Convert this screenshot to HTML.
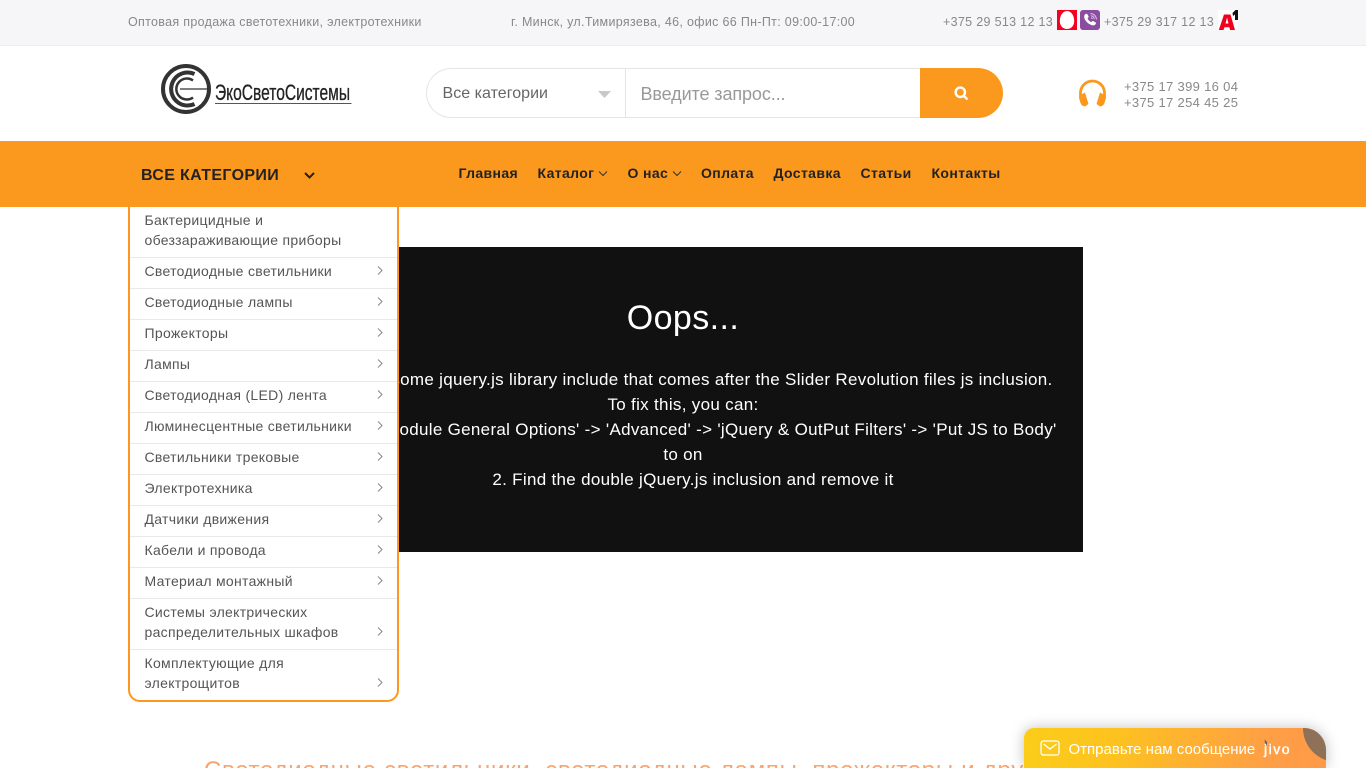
<!DOCTYPE html>
<html lang="ru"><head><meta charset="utf-8"><title>ЭкоСветоСистемы</title>
<style>
html,body{margin:0;padding:0;width:1366px;height:768px;overflow:hidden;background:#fff}
body{font-family:"Liberation Sans",sans-serif;position:relative}
.a{position:absolute;white-space:nowrap}
.top{color:#888;font-size:12.5px;letter-spacing:.32px;line-height:16px}
.nav{top:165px;font-size:14px;font-weight:bold;letter-spacing:.38px;color:#222;line-height:16px}
#menu{position:absolute;left:128px;top:207px;width:267px;height:493px;border:2px solid #fb991e;border-top:0;border-radius:0 0 12px 12px;background:#fff;z-index:3}
.m{position:absolute;left:0;width:267px;border-bottom:1px solid #e9e9e9;box-sizing:border-box;padding-left:14.5px;color:#555;font-size:14px;letter-spacing:.3px;line-height:20px}
.m svg{position:absolute;left:246px}
.oo{position:absolute;left:283px;top:247px;width:800px;height:305px;background:#111;color:#fff;text-align:center}
.oo div{position:absolute;left:0;width:800px;white-space:nowrap;font-size:17px;letter-spacing:.31px;line-height:25px}
</style></head><body>
<div class="a" style="left:0;top:0;width:1366px;height:45px;background:#f6f6f8;border-bottom:1px solid #ececec"></div>
<div class="a top" style="left:128px;top:14px">Оптовая продажа светотехники, электротехники</div>
<div class="a top" style="left:511px;top:14px">г. Минск, ул.Тимирязева, 46, офис 66 Пн-Пт: 09:00-17:00</div>
<div class="a top" style="left:943px;top:14px">+375 29 513 12 13</div>
<svg class="a" style="left:1057px;top:10px" width="20" height="20"><rect width="20" height="20" fill="#f5001e"/><path d="M10 1C5.500 1 2.800 6 2.800 11c0 4.800 3 8 7.200 8s7.200-3.200 7.200-8C17.200 6 14.500 1 10 1z" fill="#fff"/></svg>
<svg class="a" style="left:1080px;top:10px" width="20" height="20"><rect width="20" height="20" rx="3" fill="#8a4da0"/><path d="M5 4.500c1-1 2-1 2.500 0l1 1.800c.3.700 0 1.200-.7 1.700-.3.300-.2.700 0 1 .7 1.200 1.700 2.200 2.900 2.900.4.200.7.200 1-.1.500-.7 1-1 1.700-.7l1.800 1c1 .6 1 1.500 0 2.500-1 1-2.500 1.100-4.500.2-3-1.400-5-3.500-6.200-6.200C4 6.700 4 5.500 5 4.500z" fill="#fff"/><path d="M10.500 3.500c3.300.2 5.800 2.700 6 6M10.800 5.700c2 .2 3.300 1.500 3.500 3.500M11 7.700c.8.100 1.200.6 1.300 1.400" fill="none" stroke="#d9c3e3" stroke-width="1"/></svg>
<div class="a top" style="left:1104px;top:14px">+375 29 317 12 13</div>
<svg class="a" style="left:1218px;top:10px" width="20" height="20"><rect width="20" height="20" fill="#fff"/><path d="M.8 20 6 4.500h6.500L17 20h-5l-.6-2.800H6.500L5.500 20zM7.500 13.500H10.500L9 7.500z" fill="#f0001c" fill-rule="evenodd"/><path d="M14.500 3 17.500 0H20V10H17V4.500L15 6z" fill="#111"/></svg>

<svg class="a" style="left:160px;top:62px" width="196" height="54">
<circle cx="26" cy="27" r="23" fill="none" stroke="#333" stroke-width="4"/>
<path d="M34.500 12A16.500 16.500 0 1 0 34.500 42" fill="none" stroke="#333" stroke-width="4"/>
<path d="M33 18.500A10.500 10.500 0 1 0 33 35.500" fill="none" stroke="#333" stroke-width="2.500"/>
<path d="M20 27H50" stroke="#333" stroke-width="1.300"/>
<text x="55" y="38" font-family="Liberation Sans,sans-serif" font-size="22" fill="#222" stroke="#222" stroke-width=".3" textLength="135" lengthAdjust="spacingAndGlyphs">ЭкоСветоСистемы</text>
<path d="M55 41.500H191.500" stroke="#555" stroke-width="1"/>
</svg>

<div class="a" style="left:426px;top:68px;width:495px;height:50px;box-sizing:border-box;border:1px solid #e5e5e5;border-right:0;border-radius:25px 0 0 25px;background:#fff"></div>
<div class="a" style="left:625px;top:69px;width:1px;height:48px;background:#e5e5e5"></div>
<div class="a" style="left:442.500px;top:84.500px;font-size:16px;line-height:18px;color:#666;letter-spacing:.03px">Все категории</div>
<svg class="a" style="left:598px;top:91px" width="13" height="8"><path d="M0 0H13L6.500 7z" fill="#c8c8c8"/></svg>
<div class="a" style="left:640.500px;top:84px;font-size:18px;line-height:20px;color:#999;letter-spacing:-.1px">Введите запрос...</div>
<div class="a" style="left:920px;top:68px;width:83px;height:50px;background:#fb991e;border-radius:0 25px 25px 0"></div>
<svg class="a" style="left:953px;top:85px" width="16" height="16"><circle cx="7.300" cy="7.300" r="4.700" fill="none" stroke="#fff" stroke-width="2.400"/><path d="M10.800 10.800 14.500 14.500" stroke="#fff" stroke-width="2.400"/></svg>

<svg class="a" style="left:1078px;top:79px" width="29" height="28"><path d="M2.500 20v-6a12 12 0 0 1 24 0v6" fill="none" stroke="#fb991e" stroke-width="2.800"/><path d="M1.500 16.500 7 13.500 10.500 25 7 27.500 4 26.500C2 24 1 20 1.500 16.500zM27.500 16.500 22 13.500 18.500 25 22 27.500 25 26.500C27 24 28 20 27.500 16.500z" fill="#fb991e"/></svg>
<div class="a top" style="left:1124px;top:79px;font-size:13px">+375 17 399 16 04</div>
<div class="a top" style="left:1124px;top:95px;font-size:13px">+375 17 254 45 25</div>

<div class="a" style="left:0;top:141px;width:1366px;height:66px;background:#fb991e"></div>
<div class="a" style="left:141px;top:166px;font-size:16px;line-height:19px;font-weight:bold;letter-spacing:.35px;color:#222">ВСЕ КАТЕГОРИИ</div>
<svg class="a" style="left:304px;top:171px" width="11" height="9"><path d="M1 2 5.500 6.500 10 2" fill="none" stroke="#222" stroke-width="2"/></svg>
<div class="a nav" style="left:458.500px">Главная</div>
<div class="a nav" style="left:537.500px">Каталог</div>
<svg class="a" style="left:598px;top:170px" width="10" height="7"><path d="M1 1.500 5 5.500 9 1.500" fill="none" stroke="#333" stroke-width="1"/></svg>
<div class="a nav" style="left:627.500px">О нас</div>
<svg class="a" style="left:672px;top:170px" width="10" height="7"><path d="M1 1.500 5 5.500 9 1.500" fill="none" stroke="#333" stroke-width="1"/></svg>
<div class="a nav" style="left:701px">Оплата</div>
<div class="a nav" style="left:773.500px">Доставка</div>
<div class="a nav" style="left:860.500px">Статьи</div>
<div class="a nav" style="left:931.500px">Контакты</div>

<div class="oo">
<div style="top:51px;font-size:34px;line-height:40px;letter-spacing:.43px">Oops...</div>
<div style="top:120px;left:4.500px">There is some jquery.js library include that comes after the Slider Revolution files js inclusion.</div>
<div style="top:145px">To fix this, you can:</div>
<div style="top:170px;left:2px">1. Go to 'Module General Options' -&gt; 'Advanced' -&gt; 'jQuery &amp; OutPut Filters' -&gt; 'Put JS to Body'</div>
<div style="top:195px">to on</div>
<div style="top:220px;left:10px">2. Find the double jQuery.js inclusion and remove it</div>
</div>

<div id="menu">
<div class="m" style="top:0;height:51px;padding-top:3px">Бактерицидные и<br>обеззараживающие приборы</div>
<div class="m" style="top:51px;height:31px;padding-top:3px">Светодиодные светильники<svg style="top:7px" width="8" height="11"><path d="M2 1.500 6 5.500 2 9.500" fill="none" stroke="#888" stroke-width="1"/></svg></div>
<div class="m" style="top:82px;height:31px;padding-top:3px">Светодиодные лампы<svg style="top:7px" width="8" height="11"><path d="M2 1.500 6 5.500 2 9.500" fill="none" stroke="#888" stroke-width="1"/></svg></div>
<div class="m" style="top:113px;height:31px;padding-top:3px">Прожекторы<svg style="top:7px" width="8" height="11"><path d="M2 1.500 6 5.500 2 9.500" fill="none" stroke="#888" stroke-width="1"/></svg></div>
<div class="m" style="top:144px;height:31px;padding-top:3px">Лампы<svg style="top:7px" width="8" height="11"><path d="M2 1.500 6 5.500 2 9.500" fill="none" stroke="#888" stroke-width="1"/></svg></div>
<div class="m" style="top:175px;height:31px;padding-top:3px">Светодиодная (LED) лента<svg style="top:7px" width="8" height="11"><path d="M2 1.500 6 5.500 2 9.500" fill="none" stroke="#888" stroke-width="1"/></svg></div>
<div class="m" style="top:206px;height:31px;padding-top:3px">Люминесцентные светильники<svg style="top:7px" width="8" height="11"><path d="M2 1.500 6 5.500 2 9.500" fill="none" stroke="#888" stroke-width="1"/></svg></div>
<div class="m" style="top:237px;height:31px;padding-top:3px">Светильники трековые<svg style="top:7px" width="8" height="11"><path d="M2 1.500 6 5.500 2 9.500" fill="none" stroke="#888" stroke-width="1"/></svg></div>
<div class="m" style="top:268px;height:31px;padding-top:3px">Электротехника<svg style="top:7px" width="8" height="11"><path d="M2 1.500 6 5.500 2 9.500" fill="none" stroke="#888" stroke-width="1"/></svg></div>
<div class="m" style="top:299px;height:31px;padding-top:3px">Датчики движения<svg style="top:7px" width="8" height="11"><path d="M2 1.500 6 5.500 2 9.500" fill="none" stroke="#888" stroke-width="1"/></svg></div>
<div class="m" style="top:330px;height:31px;padding-top:3px">Кабели и провода<svg style="top:7px" width="8" height="11"><path d="M2 1.500 6 5.500 2 9.500" fill="none" stroke="#888" stroke-width="1"/></svg></div>
<div class="m" style="top:361px;height:31px;padding-top:3px">Материал монтажный<svg style="top:7px" width="8" height="11"><path d="M2 1.500 6 5.500 2 9.500" fill="none" stroke="#888" stroke-width="1"/></svg></div>
<div class="m" style="top:392px;height:51px;padding-top:3px">Системы электрических<br>распределительных шкафов<svg style="top:27px" width="8" height="11"><path d="M2 1.500 6 5.500 2 9.500" fill="none" stroke="#888" stroke-width="1"/></svg></div>
<div class="m" style="top:443px;height:50px;padding-top:3px;border-bottom:0">Комплектующие для<br>электрощитов<svg style="top:27px" width="8" height="11"><path d="M2 1.500 6 5.500 2 9.500" fill="none" stroke="#888" stroke-width="1"/></svg></div>
</div>

<div class="a" style="left:204px;top:757px;font-size:24px;line-height:28px;letter-spacing:.72px;color:#fca36b">Светодиодные светильники, светодиодные лампы, прожекторы и другая</div>

<div class="a" style="left:1024px;top:728px;width:302px;height:40px;overflow:hidden;z-index:5;background:linear-gradient(95deg,#fccd19 0%,#fdc21f 30%,#fe9f45 80%,#ff9a48 100%);border-radius:10px 22px 0 0;box-shadow:0 0 14px rgba(0,0,0,.25)">
<div class="a" style="left:279px;top:-10px;width:34px;height:44px;background:#8f7158;border-radius:0 0 0 34px"></div>
<svg class="a" style="left:16px;top:12px" width="20" height="16"><rect x="1" y="1" width="18" height="14" rx="2.500" fill="none" stroke="#fff" stroke-width="1.300"/><path d="M3.500 4 10 9l6.500-5" fill="none" stroke="#fff" stroke-width="1.300"/></svg>
<div class="a" style="left:44.500px;top:12.500px;font-size:15px;line-height:18px;color:#fff">Отправьте нам сообщение</div>
<div class="a" style="left:240px;top:12px;font-size:14px;line-height:18px;font-weight:normal;color:#fff;letter-spacing:1.500px;-webkit-text-stroke:.4px #fff">jivo</div>
<svg class="a" style="left:240px;top:11px" width="4" height="7"><path d="M.5 .5 3 3 3 6.500 1 4z" fill="#5c5f78"/></svg>
</div>
</body></html>
